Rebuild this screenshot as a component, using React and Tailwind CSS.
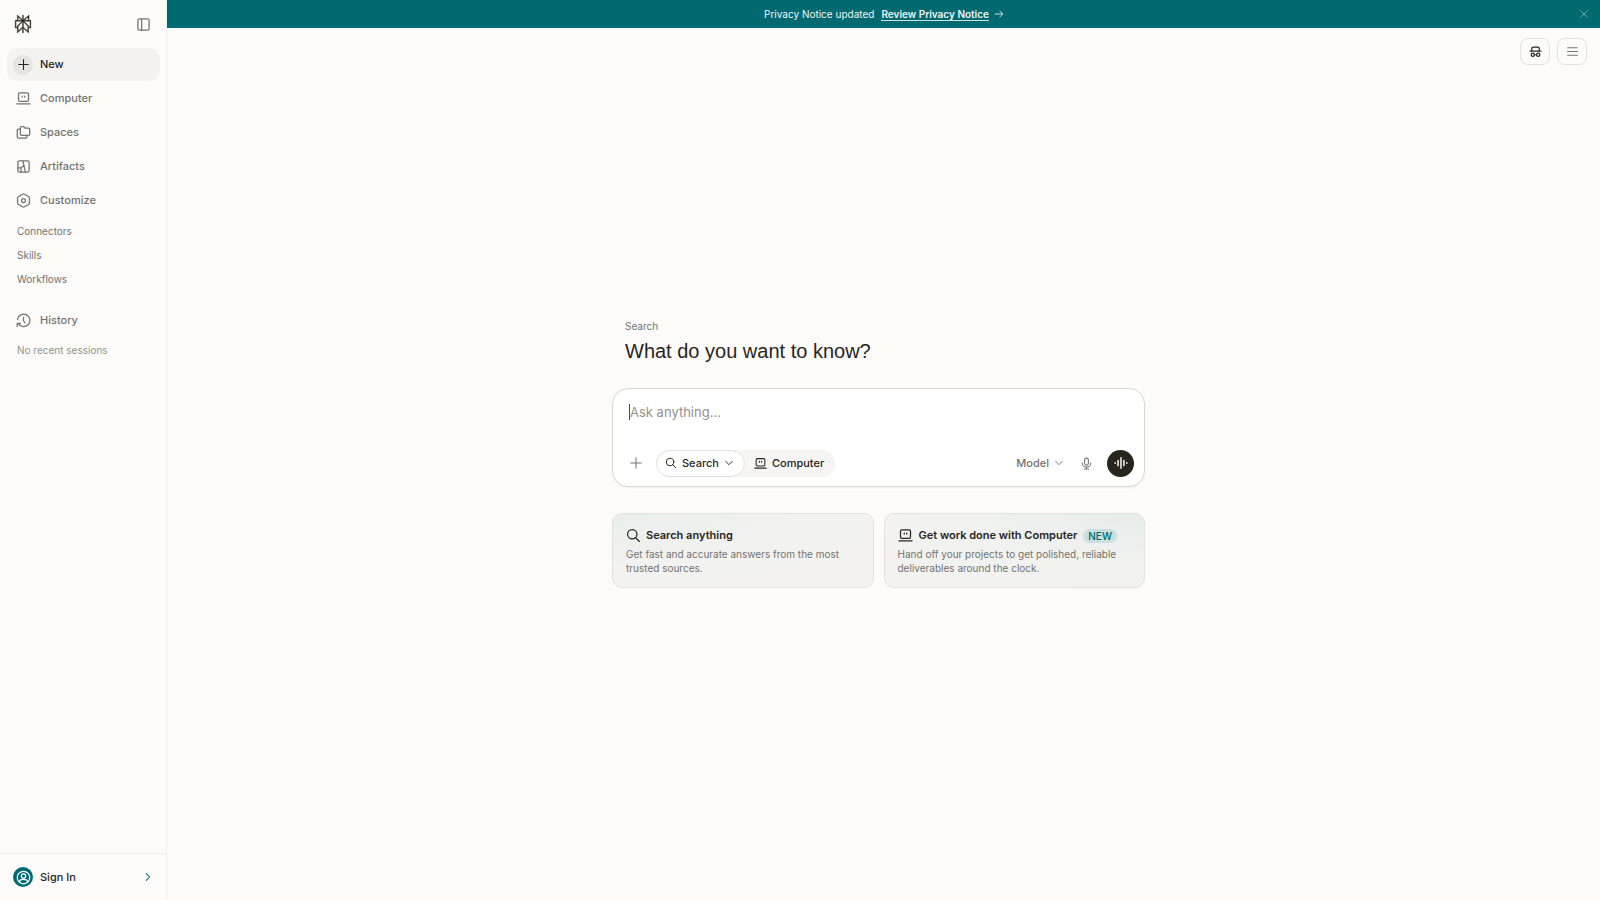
import React from 'react';
import { SiPerplexity } from 'react-icons/si';

function Icon({ className = 'size-[15px]', strokeWidth = 2, children }) {
  return (
    <svg
      viewBox="0 0 24 24"
      fill="none"
      stroke="currentColor"
      strokeWidth={strokeWidth}
      strokeLinecap="round"
      strokeLinejoin="round"
      aria-hidden="true"
      className={`shrink-0 ${className}`}
    >
      {children}
    </svg>
  );
}

const Plus = (p) => (
  <Icon {...p}>
    <path d="M12 3v18M3 12h18" />
  </Icon>
);
const Computer = (p) => (
  <Icon {...p}>
    <rect x="4" y="3" width="16" height="13.5" rx="2" />
    <path d="M1.5 20.5h21M10 8v1.6M14 8v1.6" />
  </Icon>
);
const Spaces = (p) => (
  <Icon {...p}>
    <path d="M9 2.500h3.500l2 2.500H20a2 2 0 0 1 2 2v7.500a2 2 0 0 1-2 2H9a2 2 0 0 1-2-2v-10a2 2 0 0 1 2-2z" />
    <path d="M17.500 16.500v2.500a2 2 0 0 1-2 2H5a3 3 0 0 1-3-3V8.500a2 2 0 0 1 2-2h3" />
  </Icon>
);
const Artifacts = (p) => (
  <Icon {...p}>
    <rect x="3" y="3" width="18" height="18" rx="2.5" />
    <path d="M11 3l4 18M3 14h5.500M12.700 10.500L8 14v7" />
  </Icon>
);
const Customize = (p) => (
  <Icon {...p}>
    <path d="M10.500 1.900a3 3 0 0 1 3 0l6.500 3.700a3 3 0 0 1 1.500 2.600v7.600a3 3 0 0 1-1.500 2.600l-6.500 3.700a3 3 0 0 1-3 0L4 18.400a3 3 0 0 1-1.500-2.600V8.200A3 3 0 0 1 4 5.600z" />
    <circle cx="12" cy="12" r="3.200" />
  </Icon>
);
const History = (p) => (
  <Icon {...p}>
    <path d="M12 7v5l2 3.500" />
    <path d="M2.300 10.500A10 10 0 1 1 3.700 17M2 21.500V16.500h5" />
  </Icon>
);
const Sidebar = (p) => (
  <Icon {...p}>
    <rect x="3" y="3" width="18" height="18" rx="2.500" />
    <path d="M9 3v18" />
  </Icon>
);
const Spy = (p) => (
  <Icon {...p}>
    <path d="M2 11.500h20M5 11.500V7a3 3 0 0 1 3-3h8a3 3 0 0 1 3 3v4.500M10 18h4" />
    <circle cx="7" cy="18" r="3" />
    <circle cx="17" cy="18" r="3" />
  </Icon>
);
const Menu = (p) => (
  <Icon {...p}>
    <path d="M3 5h18M3 12h18M3 19h18" />
  </Icon>
);
const SearchIcon = (p) => (
  <Icon {...p}>
    <circle cx="10" cy="10" r="7.500" />
    <path d="M21.500 21.500l-6-6" />
  </Icon>
);
const ChevronDown = (p) => (
  <Icon {...p}>
    <path d="M4 8l8 8 8-8" />
  </Icon>
);
const ChevronRight = (p) => (
  <Icon {...p}>
    <path d="M8 4l8 8-8 8" />
  </Icon>
);
const Close = (p) => (
  <Icon {...p}>
    <path d="M4 4l16 16M20 4L4 20" />
  </Icon>
);
const Arrow = (p) => (
  <Icon {...p}>
    <path d="M3 12h18M14 5l7 7-7 7" />
  </Icon>
);
const Mic = (p) => (
  <Icon {...p}>
    <rect x="8.500" y="2" width="7" height="13" rx="3.500" />
    <path d="M4 11a8 7.500 0 0 0 16 0M12 18.500V22M8 22h8" />
  </Icon>
);
const Wave = (p) => (
  <Icon {...p}>
    <path d="M2 11.500v1M7 7.500v9M12 3v18M17 7.500v9M22 11.500v1" />
  </Icon>
);
const User = (p) => (
  <Icon {...p}>
    <circle cx="12" cy="12" r="10" />
    <circle cx="12" cy="9.500" r="3.500" />
    <path d="M5.500 19.500a6.500 4.500 0 0 1 13 0" />
  </Icon>
);

const nav = [
  { label: 'Computer', icon: Computer },
  { label: 'Spaces', icon: Spaces },
  { label: 'Artifacts', icon: Artifacts },
  { label: 'Customize', icon: Customize },
];

const navRow = 'flex h-[33px] items-center gap-[7px] rounded-[10px] px-[6px] text-[11px] font-medium';
const iconCell = 'flex size-5 shrink-0 items-center justify-center rounded-full';

function SidebarPanel() {
  return (
    <aside className="flex w-[167px] shrink-0 flex-col border-r border-[#efeeeb] bg-[#fcfbf9]">
      <div className="flex h-12 items-center justify-between pr-[15px] pl-[14px]">
        <a href="#" aria-label="Perplexity" className="text-[#28251d]">
          <SiPerplexity className="size-[18px] stroke-current stroke-[0.5]" />
        </a>
        <button type="button" aria-label="Toggle sidebar" className="text-[#75736e]">
          <Sidebar />
        </button>
      </div>
      <nav className="flex flex-col gap-px pr-[6px] pl-[7px]">
        <a href="#" className={`${navRow} bg-[#f3f2f0] text-[#28251d]`}>
          <span className={`${iconCell} bg-[#e6e4e1]`}>
            <Plus className="size-[13px]" />
          </span>
          New
        </a>
        {nav.map(({ label, icon: Glyph }) => (
          <a key={label} href="#" className={`${navRow} text-[#75736e]`}>
            <span className={iconCell}>
              <Glyph />
            </span>
            {label}
          </a>
        ))}
        <div className="flex flex-col pt-px pl-[10px] text-[10px] leading-6 text-[#75736e]">
          <a href="#">Connectors</a>
          <a href="#">Skills</a>
          <a href="#">Workflows</a>
        </div>
        <a href="#" className={`${navRow} mt-3 text-[#75736e]`}>
          <span className={iconCell}>
            <History />
          </span>
          History
        </a>
        <p className="pl-[10px] text-[10px] leading-6 text-[#94928d]">No recent sessions</p>
      </nav>
      <button
        type="button"
        className="mt-auto flex h-[47px] items-center gap-[7px] border-t border-[#efeeeb] pr-[13px] pl-[13px] text-[11px] font-medium text-[#28251d]"
      >
        <span className={`${iconCell} bg-[#016a71] text-white`}>
          <User />
        </span>
        Sign In
        <ChevronRight className="ml-auto size-[10px]  text-[#016a71]" strokeWidth={2.5} />
      </button>
    </aside>
  );
}

function Banner() {
  return (
    <div className="flex h-7 items-center bg-[#016a71] pr-[11px] pl-[22px] text-[10px] text-[#eef4f3]">
      <div className="flex flex-1 items-center justify-center gap-[7px]">
        <span>Privacy Notice updated</span>
        <a href="#" className="flex items-center gap-[5px] font-semibold">
          <span className="border-b border-[#cfe0df] leading-3">Review Privacy Notice</span>
          <Arrow className="size-[10px]" />
        </a>
      </div>
      <button type="button" aria-label="Dismiss" className="text-[#7fb1b3]">
        <Close className="size-[10px]" />
      </button>
    </div>
  );
}

function Composer() {
  return (
    <form className="rounded-[16px] border border-[#d9d8d5] bg-white pt-[13px] pr-[10px] pb-[9px] pl-[13px] shadow-[0_1px_2px_rgba(0,0,0,0.05)]">
      <div className="relative h-12 pl-1">
        <textarea
          aria-label="Ask anything"
          placeholder="Ask anything…"
          rows={1}
          className="block w-full resize-none bg-transparent text-[13px] leading-5 caret-[#016a71] outline-none placeholder:text-[#94928d]"
        />
        <span className="absolute top-[2px] left-[3px] h-4 w-px bg-[#016a71]" />
      </div>
      <div className="flex items-center">
        <button type="button" aria-label="Add files" className="mr-[10px] flex h-[27px] w-5 items-center justify-center text-[#75736e]">
          <Plus className="size-[14px]" strokeWidth={1.75} />
        </button>
        <div className="flex h-[27px] items-center rounded-full bg-[#f6f5f4] text-[11px] font-medium text-[#28251d]">
          <button type="button" className="flex h-[27px] items-center gap-[5px] rounded-full border border-[#e2e1de] bg-white pr-[10px] pl-[8px]">
            <SearchIcon className="size-[12px]" />
            Search
            <ChevronDown className="size-[10px]" strokeWidth={2.25} />
          </button>
          <button type="button" className="flex items-center gap-[5px] pr-[11px] pl-[9px]">
            <Computer className="size-[13px]" />
            Computer
          </button>
        </div>
        <button type="button" className="ml-auto flex items-center gap-[5px] text-[11px] font-medium text-[#75736e]">
          Model
          <ChevronDown className="size-[10px]" strokeWidth={2.25} />
        </button>
        <button type="button" aria-label="Dictate" className="ml-4 text-[#75736e]">
          <Mic className="size-[13px]" />
        </button>
        <button type="button" aria-label="Voice mode" className="ml-[14px] flex size-[27px] items-center justify-center rounded-full bg-[#28251d] text-white">
          <Wave className="size-[14px]" strokeWidth={2.5} />
        </button>
      </div>
    </form>
  );
}

const cardBase = 'rounded-[10px] border border-[#e2e1de] px-[13px] pt-[14px] pb-3 text-left';

function Cards() {
  return (
    <div className="mt-[26px] grid grid-cols-2 gap-[10px]">
      <button type="button" className={`${cardBase} bg-radial-[at_0%_0%] from-[#e9eeec] via-[#f2f2f0] to-[#f3f2f0]`}>
        <span className="flex h-4 items-center gap-[5px] text-[11px] font-semibold text-[#28251d]">
          <SearchIcon />
          Search anything
        </span>
        <span className="mt-[3px] block text-[10px] leading-[14px] text-[#75736e]">
          Get fast and accurate answers from the most trusted sources.
        </span>
      </button>
      <button type="button" className={`${cardBase} bg-radial-[at_100%_0%] from-[#e6ecea] via-[#f1f2f0] to-[#f3f2f0]`}>
        <span className="flex h-4 items-center gap-[6px] text-[11px] font-semibold text-[#28251d]">
          <Computer />
          Get work done with Computer
          <span className="rounded-full bg-[#c9dfdd] px-[5px] text-[10px] leading-[14px] font-medium text-[#016a71]">NEW</span>
        </span>
        <span className="mt-[3px] block text-[10px] leading-[14px] text-[#75736e]">
          Hand off your projects to get polished, reliable deliverables around the clock.
        </span>
      </button>
    </div>
  );
}

const squareButton = 'flex h-[27px] w-[30px] items-center justify-center rounded-[8px] border border-[#e2e1de]';

export default function App() {
  return (
    <div className="flex min-h-screen bg-[#fcfbf9] font-['Inter',sans-serif] antialiased">
      <SidebarPanel />
      <div className="flex min-w-0 flex-1 flex-col">
        <Banner />
        <header className="flex h-[46px] items-center justify-end gap-[7px] pr-[13px]">
          <button type="button" aria-label="Incognito" className={`${squareButton} text-[#28251d]`}>
            <Spy className="size-[13px]" strokeWidth={2.25} />
          </button>
          <button type="button" aria-label="Menu" className={`${squareButton} text-[#75736e]`}>
            <Menu className="size-[13px]" />
          </button>
        </header>
        <main className="flex flex-1 flex-col items-center justify-center pr-[10px] pb-[67px]">
          <div className="w-full max-w-[533px]">
            <div className="mb-6 pl-[13px]">
              <p className="text-[10px] leading-3 text-[#75736e]">Search</p>
              <h1 className="mt-[6px] font-['Liberation_Sans',sans-serif] text-[20px] leading-[26px] text-[#28251d]">
                What do you want to know?
              </h1>
            </div>
            <Composer />
            <Cards />
          </div>
        </main>
      </div>
    </div>
  );
}
